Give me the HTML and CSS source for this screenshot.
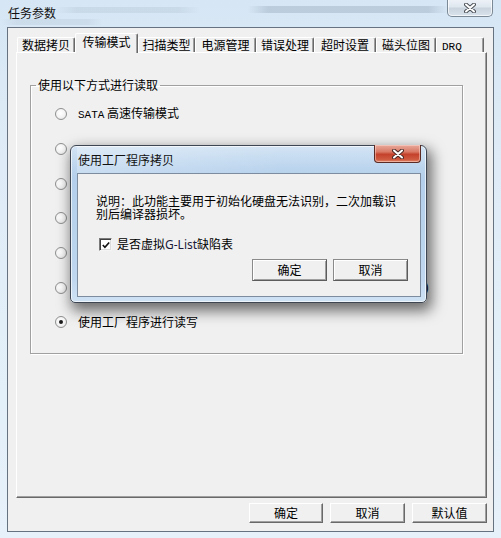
FILE: index.html
```html
<!DOCTYPE html>
<html>
<head>
<meta charset="utf-8">
<title>任务参数</title>
<link rel="stylesheet" href="styles.css">
</head>
<body>
<div class="window">
  <div class="titlebar">
    <span class="title">任务参数</span>
    <span class="close-outer">
      <svg width="12" height="10" viewBox="0 0 12 10"><path d="M2 1.5 L10 8.5 M10 1.5 L2 8.5" stroke="#4a4f56" stroke-width="4" stroke-linecap="round"/><path d="M2 1.5 L10 8.5 M10 1.5 L2 8.5" stroke="#fff" stroke-width="2" stroke-linecap="round"/></svg>
    </span>
  </div>
  <div class="client">
    <div class="tabbar">
      <div class="tab t1">数据拷贝</div>
      <div class="tab t2 sel">传输模式</div>
      <div class="tab t3">扫描类型</div>
      <div class="tab t4">电源管理</div>
      <div class="tab t5">错误处理</div>
      <div class="tab t6">超时设置</div>
      <div class="tab t7">磁头位图</div>
      <div class="tab t8"><span class="mono">DRQ</span></div>
    </div>
    <div class="panel">
      <fieldset class="group">
        <legend>使用以下方式进行读取</legend>
        <div class="opt"><span class="radio"></span><span class="lbl"><span class="mono">SATA</span> 高速传输模式</span></div>
        <div class="opt"><span class="radio"></span></div>
        <div class="opt"><span class="radio"></span></div>
        <div class="opt"><span class="radio"></span></div>
        <div class="opt"><span class="radio"></span></div>
        <div class="opt"><span class="radio"></span><span class="lbl wide">)</span></div>
        <div class="opt"><span class="radio on"></span><span class="lbl">使用工厂程序进行读写</span></div>
      </fieldset>
    </div>
    <div class="btnrow">
      <button class="btn b-ok">确定</button>
      <button class="btn b-cancel">取消</button>
      <button class="btn b-def">默认值</button>
    </div>
  </div>

  <div class="dialog">
    <div class="dtitlebar">
      <span class="dtitle">使用工厂程序拷贝</span>
      <span class="dclose">
        <svg width="12" height="10" viewBox="0 0 12 10"><path d="M2 1.5 L10 8.5 M10 1.5 L2 8.5" stroke="#4b2a26" stroke-width="4" stroke-linecap="round"/><path d="M2 1.5 L10 8.5 M10 1.5 L2 8.5" stroke="#fff" stroke-width="2" stroke-linecap="round"/></svg>
      </span>
    </div>
    <div class="dclient">
      <p class="desc">说明：此功能主要用于初始化硬盘无法识别，二次加载识别后编译器损坏。</p>
      <div class="chkrow">
        <span class="chk"><svg width="11" height="11" viewBox="0 0 11 11"><path d="M2 5 L4.3 7.5 L9 2.2" fill="none" stroke="#111" stroke-width="1.8"/></svg></span>
        <span class="chklbl">是否虚拟<span class="latin">G-List</span>缺陷表</span>
      </div>
      <div class="dbtnrow">
        <button class="dbtn">确定</button>
        <button class="dbtn">取消</button>
      </div>
    </div>
  </div>
</div>
</body>
</html>
```
FILE: styles.css
```css
* { box-sizing: border-box; }
html, body { margin: 0; padding: 0; }
body {
  width: 501px;
  height: 538px;
  overflow: hidden;
  font-family: "Noto Sans CJK SC", "Noto Sans", sans-serif;
  font-size: 12px;
  color: #000;
}
.mono { font-family: "Liberation Mono", "DejaVu Sans Mono", monospace; font-size: 11px; }
.latin { font-family: "Noto Sans", "Open Sans", sans-serif; font-size: 12px; color: #1a1a3a; }

.window {
  position: relative;
  width: 501px;
  height: 538px;
  background:
    linear-gradient(90deg, rgba(120,140,160,0), rgba(120,140,160,.14) 15%, rgba(120,140,160,.14) 85%, rgba(120,140,160,0)) 55px 7px / 145px 6px no-repeat,
    linear-gradient(90deg, rgba(80,100,130,0), rgba(80,100,130,.2) 10%, rgba(80,100,130,.2) 90%, rgba(80,100,130,0)) 248px 6px / 200px 7px no-repeat,
    linear-gradient(90deg, rgba(120,140,160,0), rgba(120,140,160,.12) 15%, rgba(120,140,160,.12) 85%, rgba(120,140,160,0)) 2px 19px / 100px 6px no-repeat,
    linear-gradient(180deg, #d6e6f4 0%, #dfecf7 30%, #e6f1fa 100%);
}

.titlebar {
  height: 27px;
  display: flex;
  align-items: flex-start;
  padding: 0 8px 0 8px;
}
.title {
  margin-top: 5px;
  line-height: 16px;
  font-size: 12px;
  color: #111;
}
.close-outer {
  margin-left: auto;
  margin-top: -1px;
  width: 46px;
  height: 18px;
  border: 1px solid #7b8896;
  border-top: none;
  border-radius: 0 0 5px 5px;
  background: linear-gradient(180deg, #eef3f8 0%, #dfe7ef 45%, #c9d4de 55%, #d9e3ec 100%);
  box-shadow: inset 0 0 0 1px rgba(255,255,255,.7);
  display: flex;
  align-items: center;
  justify-content: center;
}

.client {
  margin-left: 7px;
  width: 487px;
  height: 505px;
  border: 1px solid #66727f;
  background: #f0f0f0;
}

.tabbar {
  height: 24px;
  display: flex;
  align-items: flex-end;
  padding-left: 9px;
}
.tab {
  height: 15px;
  border-top: 1px solid #fff;
  border-left: 1px solid #fff;
  border-right: 1px solid #696969;
  box-shadow: inset -1px 0 0 #a0a0a0;
  border-radius: 2px 2px 0 0;
  text-align: center;
  line-height: 13px;
  background: #f0f0f0;
  white-space: nowrap;
}
.tab.sel {
  height: 20px;
  margin-bottom: -1px;
  line-height: 15px;
  position: relative;
  z-index: 1;
}
.t1 { width: 58px; }
.t2 { width: 63px; }
.t3 { width: 57px; }
.t4 { width: 61px; }
.t5 { width: 58px; }
.t6 { width: 62px; }
.t7 { width: 60px; }
.t8 { width: 48px; text-align: left; padding-left: 5px; }

.panel {
  margin-left: 8px;
  width: 471px;
  height: 446px;
  border: 1px solid;
  border-color: #fff #696969 #696969 #fff;
  box-shadow: inset -1px -1px 0 #a0a0a0;
  padding: 0;
}

.group {
  margin: 24px 0 0 13px;
  padding: 4px 0 0 0;
  width: 433px;
  height: 277px;
  border: 1px solid #a0a0a0;
  box-shadow: 1px 1px 0 #fff, inset 1px 1px 0 #fff;
}
.group legend {
  margin-left: 5px;
  padding: 0 2px;
  line-height: 16px;
}
.opt {
  height: 34.67px;
  display: flex;
  align-items: center;
  padding-left: 24px;
  white-space: nowrap;
}
.radio {
  width: 12px;
  height: 12px;
  border-radius: 50%;
  border: 1px solid #8e8f8f;
  background: radial-gradient(circle at 45% 40%, #ffffff 0%, #f4f4f4 50%, #dcdcdc 100%);
  display: flex;
  align-items: center;
  justify-content: center;
  flex: none;
}
.radio.on::after {
  content: "";
  width: 4px;
  height: 4px;
  border-radius: 50%;
  background: #1a1a1a;
}
.lbl { margin-left: 11px; line-height: 16px; }
.lbl.wide { display: inline-block; width: 352px; text-align: right; font-family: "Liberation Mono", monospace; }

.btnrow {
  display: flex;
  justify-content: flex-end;
  margin-top: 5px;
  padding-right: 6px;
}
.btn {
  height: 20px;
  width: 75px;
  margin-left: 7px;
  padding: 0;
  border: 1px solid;
  border-color: #fff #696969 #696969 #fff;
  box-shadow: inset -1px -1px 0 #a0a0a0;
  background: #f0f0f0;
  font-family: inherit;
  font-size: 12px;
  line-height: 16px;
  color: #000;
}
.b-ok { width: 74px; }

/* dialog */
.dialog {
  position: absolute;
  left: 70px;
  top: 145px;
  width: 357px;
  height: 158px;
  border: 1px solid #3d4652;
  border-radius: 6px 6px 5px 5px;
  background: linear-gradient(180deg, #d3e4f4 0%, #bcd5ee 14%, #b3cfeb 22%, #bfd7ef 85%, #cfe2f4 100%);
  box-shadow: 3px 6px 14px 2px rgba(0,0,0,.55), inset 0 0 0 1px rgba(255,255,255,.65);
  padding: 0 5px 5px 6px;
  display: flex;
  flex-direction: column;
  z-index: 5;
}
.dtitlebar {
  height: 27px;
  display: flex;
  align-items: flex-start;
  padding-left: 1px;
  background: linear-gradient(90deg, rgba(255,255,255,.25), rgba(255,255,255,0) 60%);
}
.dtitle {
  margin-top: 6px;
  line-height: 16px;
  color: #111;
}
.dclose {
  margin-left: auto;
  margin-top: -1px;
  width: 47px;
  height: 18px;
  border: 1px solid #5a2a24;
  border-top: none;
  border-radius: 0 0 4px 4px;
  background: linear-gradient(180deg, #e8aa9c 0%, #d97a66 40%, #c4412c 55%, #cf5a40 85%, #e08a6c 100%);
  box-shadow: inset 0 0 0 1px rgba(255,220,210,.5);
  display: flex;
  align-items: center;
  justify-content: center;
}
.dclient {
  flex: 1;
  border: 1px solid #7d8d9f;
  background: #f0f0f0;
  padding: 20px 12px 0 18px;
  display: flex;
  flex-direction: column;
}
.desc {
  margin: 0;
  width: 304px;
  line-height: 13px;
}
.chkrow {
  display: flex;
  align-items: center;
  margin-top: 18px;
  padding-left: 3px;
  height: 13px;
}
.chk {
  width: 13px;
  height: 13px;
  border: 1px solid;
  border-color: #7a7a7a #f4f4f4 #f4f4f4 #7a7a7a;
  box-shadow: inset 1px 1px 0 #404040, inset -1px -1px 0 #dcdcdc;
  background: #fff;
  display: flex;
  align-items: center;
  justify-content: center;
  flex: none;
}
.chk svg { margin: 1px 0 0 1px; }
.chklbl { margin-left: 5px; line-height: 16px; }
.dbtnrow {
  display: flex;
  justify-content: flex-end;
  gap: 6px;
  margin-top: 8px;
}
.dbtn {
  width: 75px;
  height: 22px;
  padding: 0;
  border: 1px solid;
  border-color: #8a8a8a #5c5c5c #5c5c5c #8a8a8a;
  box-shadow: inset 1px 1px 0 #fff, inset -1px -1px 0 #a0a0a0;
  background: #f0f0f0;
  font-family: inherit;
  font-size: 12px;
  line-height: 16px;
  color: #000;
}
```
